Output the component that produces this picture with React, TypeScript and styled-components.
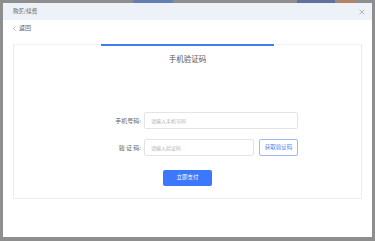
import React from "react";
import styled, { createGlobalStyle } from "styled-components";

const Global = createGlobalStyle`
  html, body {
    margin: 0;
    padding: 0;
    width: 375px;
    height: 241px;
    overflow: hidden;
    background: #8e8e8e;
    font-family: "Noto Sans CJK SC", "Noto Sans", sans-serif;
  }
  * { box-sizing: border-box; }
`;

const Page = styled.div`
  width: 375px;
  height: 241px;
  padding: 3px 3px 0 3px;
  position: relative;
`;

const BackdropBar = styled.div<{ $left: number; $width: number; $color: string }>`
  position: absolute;
  top: 0;
  left: ${(p) => p.$left}px;
  width: ${(p) => p.$width}px;
  height: 3px;
  background: ${(p) => p.$color};
  opacity: 0.5;
`;

const Modal = styled.div`
  position: relative;
  width: 369px;
  height: 234px;
  background: #fff;
  display: flex;
  flex-direction: column;
`;

const Header = styled.div`
  height: 17px;
  background: #edf2f9;
  display: flex;
  align-items: center;
  justify-content: space-between;
  padding: 0 7px 0 10px;
`;

const HeaderTitle = styled.span`
  font-size: 5.5px;
  color: #666;
  line-height: 1;
`;

const Close = styled.svg`
  width: 6px;
  height: 6px;
`;

const BackRow = styled.div`
  height: 16px;
  display: flex;
  align-items: center;
  gap: 3px;
  padding-left: 10px;
  font-size: 6px;
  color: #666;
  line-height: 1;
`;

const Chevron = styled.svg`
  width: 3px;
  height: 5px;
`;

const Body = styled.div`
  padding: 8px 10px 0 10px;
`;

const Card = styled.div`
  height: 155px;
  border: 1px solid #ececec;
  border-top-color: #f2f2f2;
  display: flex;
  flex-direction: column;
  align-items: center;
`;

const TopBar = styled.div`
  width: 173px;
  height: 2px;
  background: #3f7ef2;
  margin-top: -1px;
`;

const CardTitle = styled.div`
  margin-top: 8px;
  font-size: 7.5px;
  color: #555;
  line-height: 10px;
`;

const Form = styled.div`
  margin-top: 48px;
  display: flex;
  flex-direction: column;
  gap: 10px;
  margin-right: 2px;
`;

const Row = styled.div`
  display: flex;
  align-items: center;
  gap: 3px;
`;

const Label = styled.span`
  width: 66px;
  text-align: right;
  font-size: 6px;
  color: #666;
  line-height: 1;
  white-space: pre;
`;

const Input = styled.div<{ $width: number }>`
  width: ${(p) => p.$width}px;
  height: 17px;
  border: 1px solid #e4e4e4;
  border-radius: 2px;
  display: flex;
  align-items: center;
  padding-left: 6px;
  font-size: 5px;
  color: #b4b4b4;
  line-height: 1;
`;

const CodeButton = styled.button`
  margin-left: 2px;
  width: 39px;
  height: 17px;
  border: 1px solid #9db8f3;
  border-radius: 2px;
  background: #fff;
  color: #4a7ef0;
  font-size: 5.5px;
  font-family: inherit;
  padding: 0;
  line-height: 1;
`;

const PayButton = styled.button`
  margin-top: 14px;
  width: 49px;
  height: 16px;
  border: none;
  border-radius: 2px;
  background: #3b78fb;
  color: #fff;
  font-size: 5.5px;
  font-family: inherit;
  padding: 0;
  line-height: 1;
`;

export default function App() {
  return (
    <>
      <Global />
      <Page>
        <BackdropBar $left={133} $width={40} $color="#3b6fd8" />
        <BackdropBar $left={297} $width={38} $color="#2f56a8" />
        <BackdropBar $left={338} $width={18} $color="#d9783a" />
        <Modal>
          <Header>
            <HeaderTitle>购买/续费</HeaderTitle>
            <Close viewBox="0 0 10 10">
              <path d="M1 1 L9 9 M9 1 L1 9" stroke="#9a9a9a" strokeWidth="1.2" />
            </Close>
          </Header>
          <BackRow>
            <Chevron viewBox="0 0 6 10">
              <path d="M5 1 L1 5 L5 9" stroke="#888" strokeWidth="1.2" fill="none" />
            </Chevron>
            返回
          </BackRow>
          <Body>
            <Card>
              <TopBar />
              <CardTitle>手机验证码</CardTitle>
              <Form>
                <Row>
                  <Label>手机号码:</Label>
                  <Input $width={154}>请输入手机号码</Input>
                </Row>
                <Row>
                  <Label>{"验 证 码:"}</Label>
                  <Input $width={110}>请输入验证码</Input>
                  <CodeButton>获取验证码</CodeButton>
                </Row>
              </Form>
              <PayButton>立即支付</PayButton>
            </Card>
          </Body>
        </Modal>
      </Page>
    </>
  );
}
